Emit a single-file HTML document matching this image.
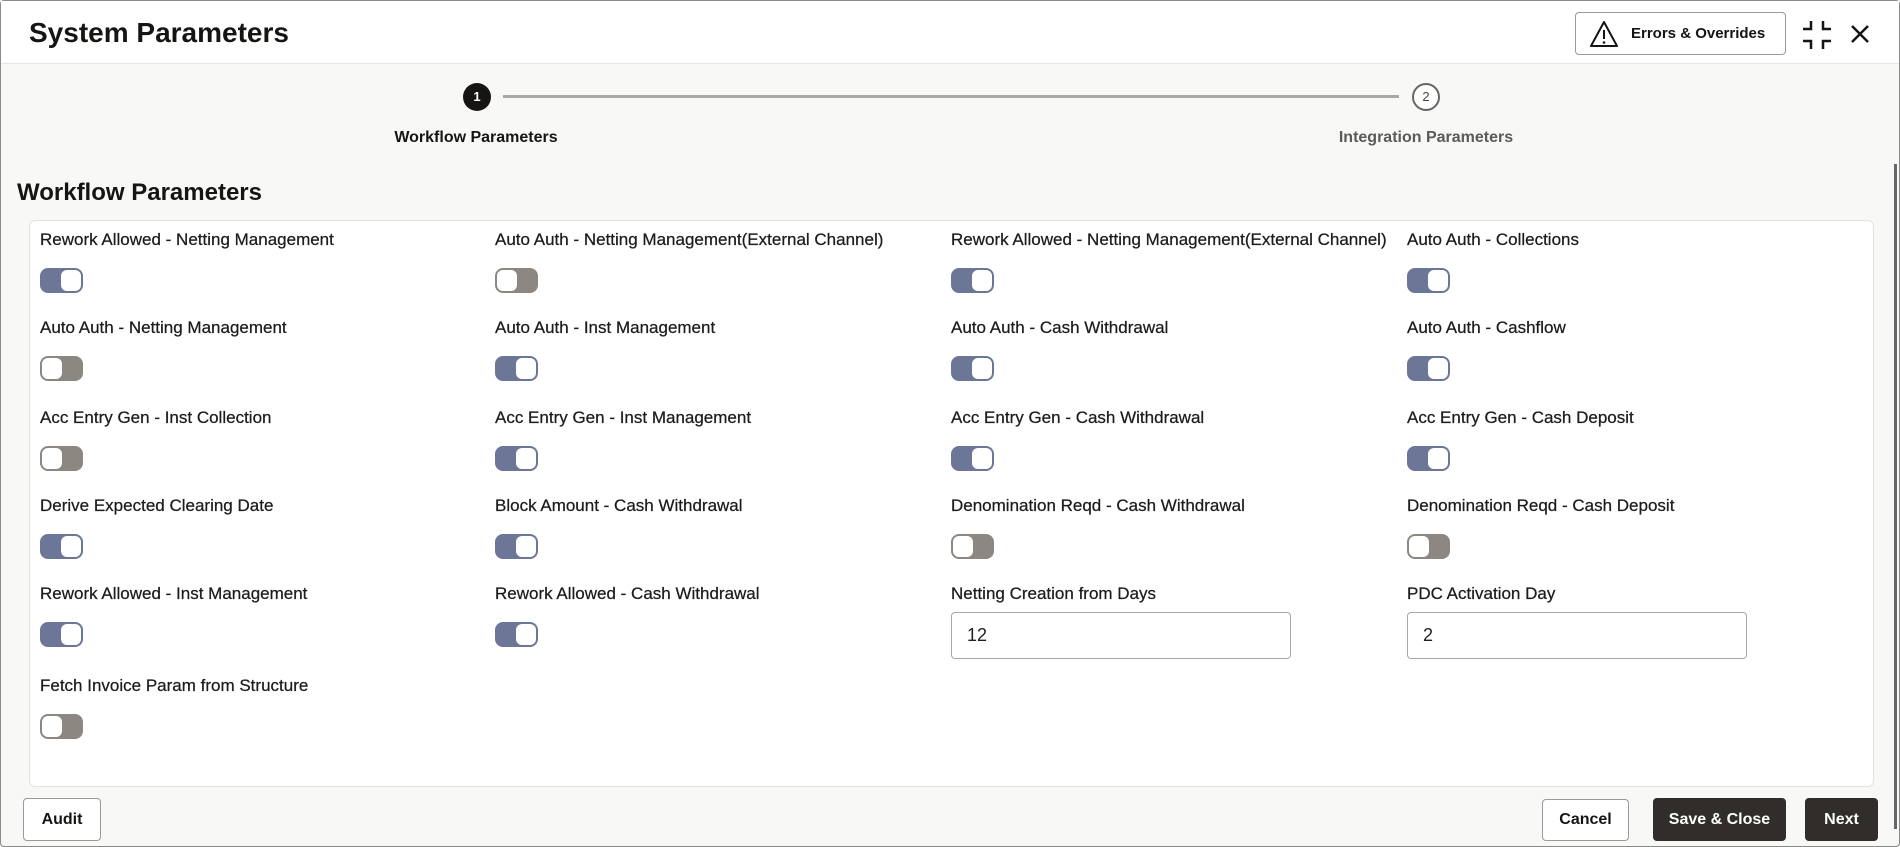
<!DOCTYPE html>
<html><head><meta charset="utf-8">
<style>
*{box-sizing:border-box;margin:0;padding:0}
html,body{width:1900px;height:847px;overflow:hidden;background:#f7f7f7;font-family:"Liberation Sans",sans-serif;color:#1f1f1f}
.abs{position:absolute}
#modal{position:absolute;left:0;top:0;width:1900px;height:847px;border:1px solid #8a8a8a;border-radius:4px;background:#f8f8f7}
#hdr{position:absolute;left:0;top:0;width:1898px;height:63px;background:#fff;border-bottom:1px solid #e6e6e6}
.title{left:28px;top:16px;font-size:28px;font-weight:bold;color:#161513}
.btn{position:absolute;border:1px solid #999;border-radius:4px;background:#fff;font-size:16px;font-weight:bold;display:flex;align-items:center;justify-content:center;color:#161513}
.dark{background:#312d2a;color:#fff;border-color:#312d2a}
.lbl{position:absolute;font-size:17px;color:#1c1c1c;white-space:nowrap;line-height:20px;-webkit-text-stroke:0.25px #1c1c1c}
.tg{position:absolute;width:43px;height:25px;border-radius:8px}
.on{background:#6c7797}
.off{background:#8d8781}
.tg::after{content:"";position:absolute;top:2px;width:20px;height:21px;background:#fff;border-radius:6px}
.on::after{right:2px}
.off::after{left:2px;top:2px}
.inp{position:absolute;width:340px;height:47px;border:1px solid #a8a8a8;border-radius:4px;background:#fff;font-size:18px;padding-left:15px;line-height:45px}
</style></head><body>
<div id="modal">
<div id="hdr"></div>
<div class="abs title">System Parameters</div>
<div class="btn" style="left:1574px;top:11px;width:211px;height:43px;justify-content:flex-start;padding-left:13px;font-size:15px">
<svg width="30" height="28" viewBox="0 0 30 28" style="margin-right:12px"><path d="M15 2 L28 26 L2 26 Z" fill="none" stroke="#161513" stroke-width="2" stroke-linejoin="round"/><line x1="15" y1="10" x2="15" y2="19" stroke="#161513" stroke-width="2"/><circle cx="15" cy="22.5" r="1.3" fill="#161513"/></svg>Errors &amp; Overrides</div>
<svg class="abs" style="left:1802px;top:20px" width="28" height="28" viewBox="0 0 28 28" fill="none" stroke="#161513" stroke-width="2.5"><path d="M8 0 V8 H0 M20 0 V8 H28 M8 28 V20 H0 M20 28 V20 H28"/></svg>
<svg class="abs" style="left:1849px;top:23px" width="20" height="20" viewBox="0 0 20 20" stroke="#161513" stroke-width="2.5"><path d="M2 2 L18 18 M18 2 L2 18"/></svg>

<div class="abs" style="left:502px;top:94px;width:896px;height:3px;background:#a8a8a8"></div>
<div class="abs" style="left:462px;top:82px;width:28px;height:28px;border-radius:50%;background:#161513;color:#fff;font-size:13px;font-weight:bold;text-align:center;line-height:28px">1</div>
<div class="abs" style="left:1411px;top:82px;width:28px;height:28px;border-radius:50%;border:2px solid #666;background:#fff;color:#444;font-size:13px;text-align:center;line-height:24px">2</div>
<div class="abs" style="left:375px;top:128px;width:200px;text-align:center;font-size:16px;font-weight:bold;color:#161513">Workflow Parameters</div>
<div class="abs" style="left:1315px;top:128px;width:220px;text-align:center;font-size:16px;font-weight:bold;color:#5a5a5a">Integration Parameters</div>

<div class="abs" style="left:16px;top:178px;font-size:24px;font-weight:bold;color:#161513">Workflow Parameters</div>
<div class="abs" style="left:28px;top:219px;width:1845px;height:567px;background:#fff;border:1px solid #e2e2e2;border-radius:6px"></div>

<div class="lbl" style="left:39px;top:229px">Rework Allowed - Netting Management</div>
<div class="lbl" style="left:494px;top:229px">Auto Auth - Netting Management(External Channel)</div>
<div class="lbl" style="left:950px;top:229px">Rework Allowed - Netting Management(External Channel)</div>
<div class="lbl" style="left:1406px;top:229px">Auto Auth - Collections</div>
<div class="tg on" style="left:39px;top:267px"></div>
<div class="tg off" style="left:494px;top:267px"></div>
<div class="tg on" style="left:950px;top:267px"></div>
<div class="tg on" style="left:1406px;top:267px"></div>

<div class="lbl" style="left:39px;top:317px">Auto Auth - Netting Management</div>
<div class="lbl" style="left:494px;top:317px">Auto Auth - Inst Management</div>
<div class="lbl" style="left:950px;top:317px">Auto Auth - Cash Withdrawal</div>
<div class="lbl" style="left:1406px;top:317px">Auto Auth - Cashflow</div>
<div class="tg off" style="left:39px;top:355px"></div>
<div class="tg on" style="left:494px;top:355px"></div>
<div class="tg on" style="left:950px;top:355px"></div>
<div class="tg on" style="left:1406px;top:355px"></div>

<div class="lbl" style="left:39px;top:407px">Acc Entry Gen - Inst Collection</div>
<div class="lbl" style="left:494px;top:407px">Acc Entry Gen - Inst Management</div>
<div class="lbl" style="left:950px;top:407px">Acc Entry Gen - Cash Withdrawal</div>
<div class="lbl" style="left:1406px;top:407px">Acc Entry Gen - Cash Deposit</div>
<div class="tg off" style="left:39px;top:445px"></div>
<div class="tg on" style="left:494px;top:445px"></div>
<div class="tg on" style="left:950px;top:445px"></div>
<div class="tg on" style="left:1406px;top:445px"></div>

<div class="lbl" style="left:39px;top:495px">Derive Expected Clearing Date</div>
<div class="lbl" style="left:494px;top:495px">Block Amount - Cash Withdrawal</div>
<div class="lbl" style="left:950px;top:495px">Denomination Reqd - Cash Withdrawal</div>
<div class="lbl" style="left:1406px;top:495px">Denomination Reqd - Cash Deposit</div>
<div class="tg on" style="left:39px;top:533px"></div>
<div class="tg on" style="left:494px;top:533px"></div>
<div class="tg off" style="left:950px;top:533px"></div>
<div class="tg off" style="left:1406px;top:533px"></div>

<div class="lbl" style="left:39px;top:583px">Rework Allowed - Inst Management</div>
<div class="lbl" style="left:494px;top:583px">Rework Allowed - Cash Withdrawal</div>
<div class="lbl" style="left:950px;top:583px">Netting Creation from Days</div>
<div class="lbl" style="left:1406px;top:583px">PDC Activation Day</div>
<div class="tg on" style="left:39px;top:621px"></div>
<div class="tg on" style="left:494px;top:621px"></div>
<div class="inp" style="left:950px;top:611px">12</div>
<div class="inp" style="left:1406px;top:611px">2</div>

<div class="lbl" style="left:39px;top:675px">Fetch Invoice Param from Structure</div>
<div class="tg off" style="left:39px;top:713px"></div>

<div class="btn" style="left:22px;top:797px;width:78px;height:43px">Audit</div>
<div class="btn" style="left:1541px;top:798px;width:87px;height:42px">Cancel</div>
<div class="btn dark" style="left:1652px;top:797px;width:133px;height:43px">Save &amp; Close</div>
<div class="btn dark" style="left:1804px;top:797px;width:73px;height:43px">Next</div>

<div class="abs" style="left:1893px;top:163px;width:3px;height:665px;background:#666"></div>
</div>
</body></html>
